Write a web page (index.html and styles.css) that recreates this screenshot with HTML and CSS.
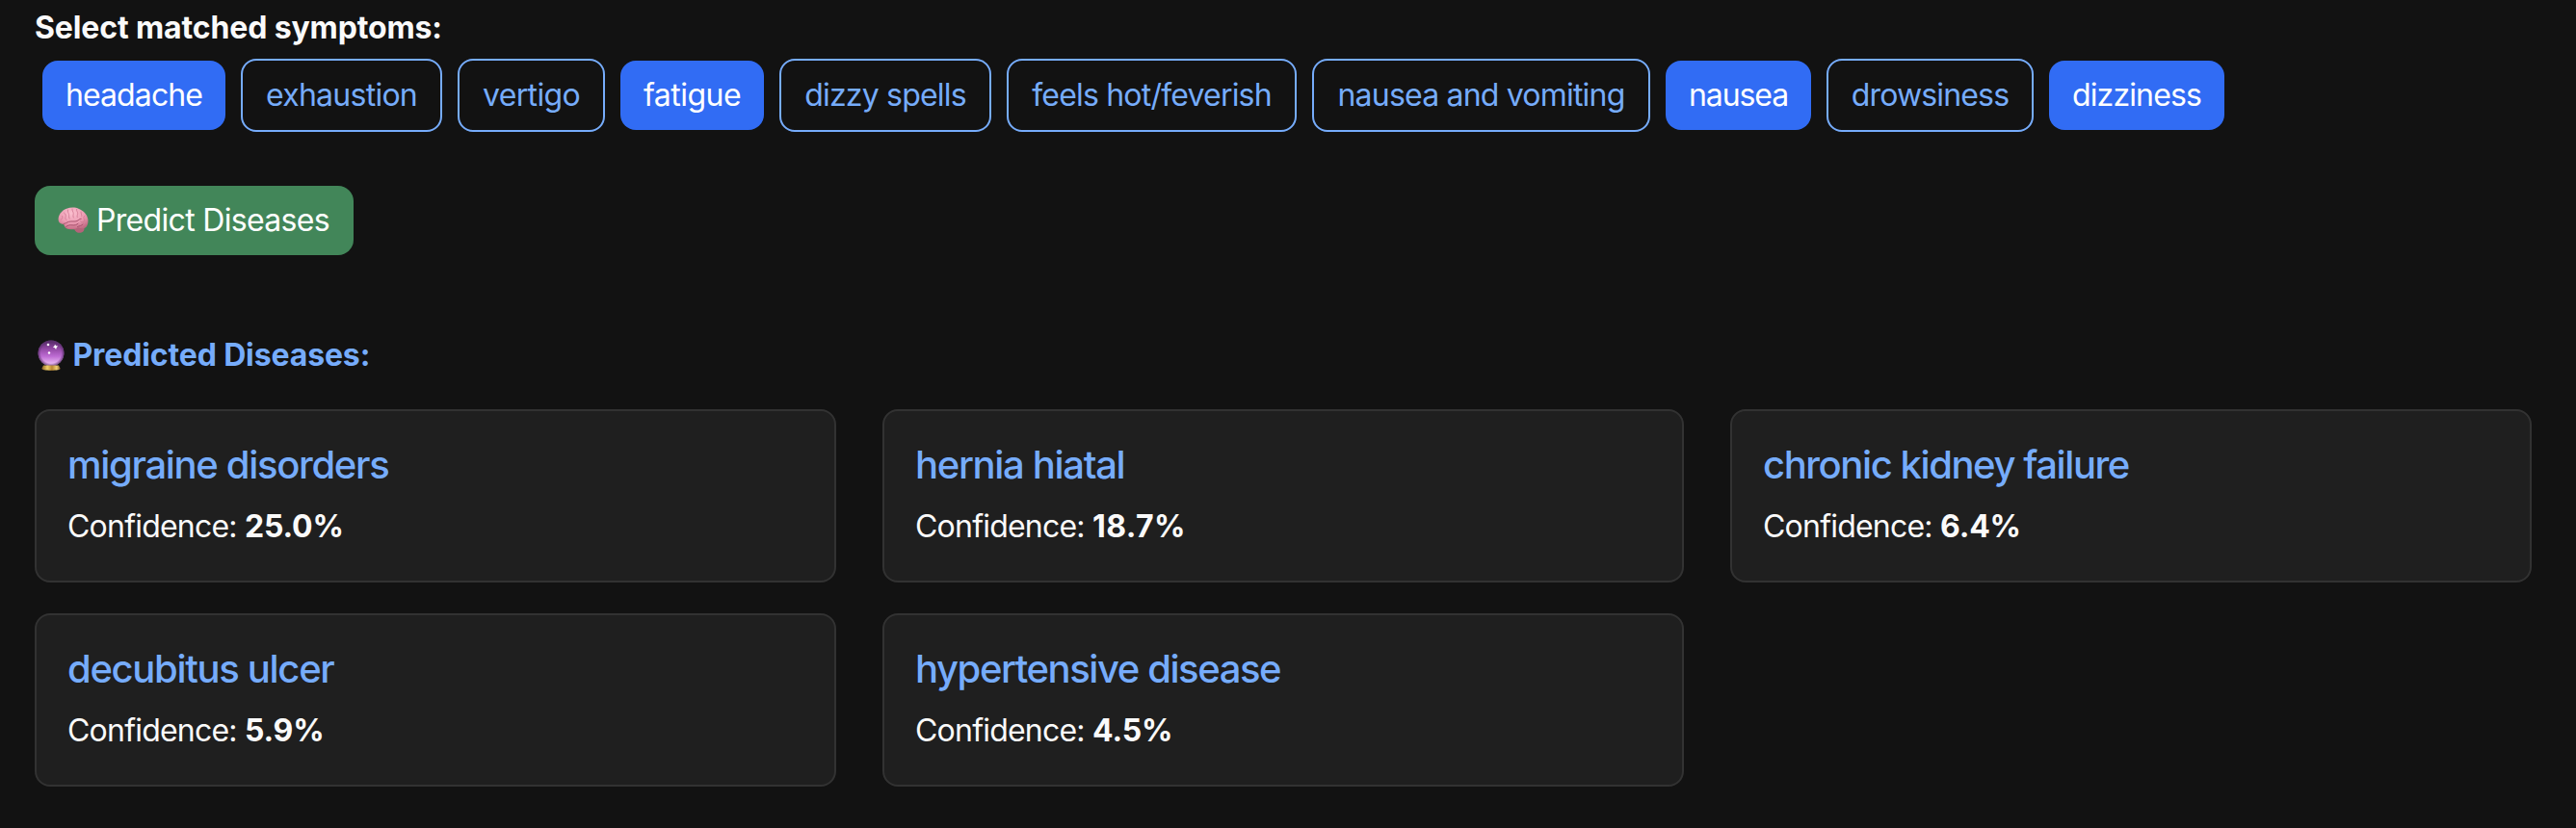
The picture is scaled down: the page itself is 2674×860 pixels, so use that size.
FILE: index.html
```html
<!DOCTYPE html>
<html lang="en">
<head>
<meta charset="utf-8">
<title>Symptom Checker</title>
<link rel="stylesheet" href="styles.css">
</head>
<body>
<main class="page">
  <p class="label">Select matched symptoms:</p>
  <div class="chips">
    <button class="chip chip-on chip-headache">headache</button>
    <button class="chip chip-exhaustion">exhaustion</button>
    <button class="chip chip-vertigo">vertigo</button>
    <button class="chip chip-on chip-fatigue">fatigue</button>
    <button class="chip chip-spells">dizzy spells</button>
    <button class="chip chip-feverish">feels hot/feverish</button>
    <button class="chip chip-vomiting">nausea and vomiting</button>
    <button class="chip chip-on chip-nausea">nausea</button>
    <button class="chip chip-drowsiness">drowsiness</button>
    <button class="chip chip-on chip-dizziness">dizziness</button>
  </div>
  <button class="predict">
    <svg class="brain" viewBox="0 0 32 28" aria-hidden="true">
      <defs>
        <radialGradient id="brain-fill" cx=".45" cy=".25" r=".75">
          <stop offset="0" stop-color="#fbc0cf"/>
          <stop offset=".6" stop-color="#eb9bb2"/>
          <stop offset="1" stop-color="#c36b84"/>
        </radialGradient>
      </defs>
      <path d="M17 21.500c0 3.500 3 5.700 6.500 5.200 2.600-.3 4.300-2.200 4-4.700l-5-3z" fill="#b5637a"/>
      <path d="M.6 13.500C.3 8.500 4 3.500 9 1.800c4-1.500 9-1.700 13 .1 4.500 1.800 8.300 5.600 9.200 10 .8 4-.4 8-2.700 9.700-2.300 1.500-5 .4-7.500-.3-2 1.600-4.500 2.400-7.500 1.900-2.500-.3-4.700-.6-6-2.300-.8-1-.7-2.200-1.600-2.900C3.500 17.500.9 16.800.6 13.500z" fill="url(#brain-fill)"/>
      <g fill="none" stroke="#a9536e" stroke-linecap="round" stroke-width="1">
        <path d="M6 17.500c2-.2 3.500-1.700 5.500-2.200 3-.8 6 .3 8.500-.8 1.700-.7 2.200-2.200 4.200-2.300"/>
        <path d="M8.500 20.500c2-1.500 4-2 6.500-1.600 2.700.4 4.500-.4 6-1.600M20.500 20.500c2-1 4-.7 5.500-2.500"/>
      </g>
      <g fill="none" stroke="#cf7590" stroke-linecap="round" stroke-width=".8">
        <path d="M3.500 13c1.300-.6 1.600-2 1.200-3.500M6.500 6c1.500 1 2.300 2.700 1.500 4.500-.5 1.300.2 2.300 1 3M10.500 3c-.8 1.500.5 3 1 4.500.5 1.700-.4 3 .6 4.500M15 2c-.5 1.500 1 2.700 1.200 4.500.2 1.500-.9 3 .1 4.500M19.500 2.500c-.3 1.500 1.200 2.500 1.200 4.200 0 1.600-1 2.300-.5 3.800M24 5c-.2 1.500 1 2.500.8 4.500M28 9c-1.200.7-1.500 2.200-.7 3.500.8 1.300.2 2.500-.8 3.500M23.500 14.500c.5 1.200 1.700 1.500 2.700 1"/>
      </g>
    </svg>
    <span>Predict Diseases</span>
  </button>
  <h2 class="heading">
    <svg class="ball" viewBox="0 0 28 32" aria-hidden="true">
      <defs>
        <linearGradient id="ball-fill" x1="0" y1="0" x2="0" y2="1">
          <stop offset="0" stop-color="#4d2660"/>
          <stop offset=".3" stop-color="#8d459f"/>
          <stop offset=".62" stop-color="#bd6bd3"/>
          <stop offset="1" stop-color="#f6cffb"/>
        </linearGradient>
        <radialGradient id="ball-edge">
          <stop offset=".78" stop-color="#5e3370" stop-opacity="0"/>
          <stop offset="1" stop-color="#5e3370" stop-opacity=".85"/>
        </radialGradient>
        <linearGradient id="base-fill" x1="0" x2="1">
          <stop offset="0" stop-color="#8a5f22"/>
          <stop offset=".3" stop-color="#f0cf6a"/>
          <stop offset=".55" stop-color="#b98530"/>
          <stop offset=".8" stop-color="#efcf72"/>
          <stop offset="1" stop-color="#7c541d"/>
        </linearGradient>
      </defs>
      <circle cx="14" cy="13.800" r="13.400" fill="url(#ball-fill)"/>
      <circle cx="14" cy="13.800" r="13.400" fill="url(#ball-edge)"/>
      <path d="M6 26.500h16l1.700 3.200c.2 1.200-4.200 2-9.700 2s-9.900-.8-9.700-2z" fill="url(#base-fill)"/>
      <g fill="#fff">
        <circle cx="11" cy="5" r="1.300"/>
        <path d="M18 4.800l1.300 1.400 1.800.4-1.400 1.300-.6 2-1.300-1.700-1.900-.6 1.500-1z"/>
        <circle cx="12" cy="13.500" r="1.200"/>
      </g>
    </svg>
    <span>Predicted Diseases:</span>
  </h2>
  <section class="results">
    <article class="card">
      <h3 class="title">migraine disorders</h3>
      <p class="confidence">Confidence: <strong>25.0%</strong></p>
    </article>
    <article class="card">
      <h3 class="title">hernia hiatal</h3>
      <p class="confidence">Confidence: <strong class="wide">18.7%</strong></p>
    </article>
    <article class="card">
      <h3 class="title title-long">chronic kidney failure</h3>
      <p class="confidence">Confidence: <strong>6.4%</strong></p>
    </article>
    <article class="card">
      <h3 class="title">decubitus ulcer</h3>
      <p class="confidence">Confidence: <strong>5.9%</strong></p>
    </article>
    <article class="card">
      <h3 class="title title-long">hypertensive disease</h3>
      <p class="confidence">Confidence: <strong>4.5%</strong></p>
    </article>
  </section>
</main>
</body>
</html>
```
FILE: styles.css
```css
* { box-sizing: border-box; }

body {
  margin: 0;
  background: #121212;
  color: #fafafa;
  font: 32px/48px Inter, sans-serif;
}

p, h2, h3 { margin: 0; }

.page {
  min-height: 860px;
  padding: 5px 46px 0 36px;
}

.label {
  font-weight: 700;
  letter-spacing: -.13px;
}

.chips {
  display: flex;
  align-items: center;
  gap: 16px;
  margin-top: 8px;
  padding-left: 8px;
}

/* Symptom toggles */
.chip {
  flex: none;
  height: 76px;
  padding: 0;
  border: 2px solid #76acfb;
  border-radius: 16px;
  background: transparent;
  color: #76acfb;
  font: inherit;
  white-space: nowrap;
  letter-spacing: -.8px;
}

.chip-on {
  height: 72px;
  border: 0;
  background: #316cf4;
  color: #fff;
}

.chip-headache { width: 190px; letter-spacing: -.9px; }
.chip-exhaustion { width: 209px; letter-spacing: -.74px; }
.chip-vertigo { width: 153px; letter-spacing: -.66px; }
.chip-fatigue { width: 149px; letter-spacing: -.5px; }
.chip-spells { width: 220px; }
.chip-feverish { width: 301px; }
.chip-vomiting { width: 351px; }
.chip-nausea { width: 151px; letter-spacing: -1.1px; }
.chip-drowsiness { width: 215px; letter-spacing: -.85px; }
.chip-dizziness { width: 182px; letter-spacing: -.85px; }

.predict {
  display: flex;
  align-items: center;
  width: 331px;
  height: 72px;
  margin-top: 56px;
  padding: 0 24px;
  border: 0;
  border-radius: 16px;
  background: #428659;
  color: #fff;
  font: inherit;
  letter-spacing: -.68px;
  white-space: nowrap;
}

.brain {
  flex: none;
  width: 32px;
  height: 28px;
  margin-right: 8px;
}

.heading {
  display: flex;
  align-items: center;
  margin-top: 80px;
  color: #76acfb;
  font-size: 32px;
  font-weight: 700;
  letter-spacing: -.13px;
}

.ball {
  flex: none;
  width: 28px;
  height: 32px;
  margin: 0 8.500px 0 3px;
}

.results {
  display: grid;
  grid-template-columns: repeat(3, 832px);
  gap: 32px 48px;
  margin-top: 32px;
}

.card {
  height: 180px;
  padding: 32px;
  border: 2px solid #323232;
  border-radius: 16px;
  background: #1f1f1f;
}

.title {
  margin-bottom: 16px;
  color: #76acfb;
  font-size: 40px;
  font-weight: 500;
  letter-spacing: -1.32px;
}

.title-long { letter-spacing: -1.42px; }

.confidence { letter-spacing: -.78px; }
.confidence strong { letter-spacing: -.2px; }
.confidence .wide { letter-spacing: .4px; }
```
